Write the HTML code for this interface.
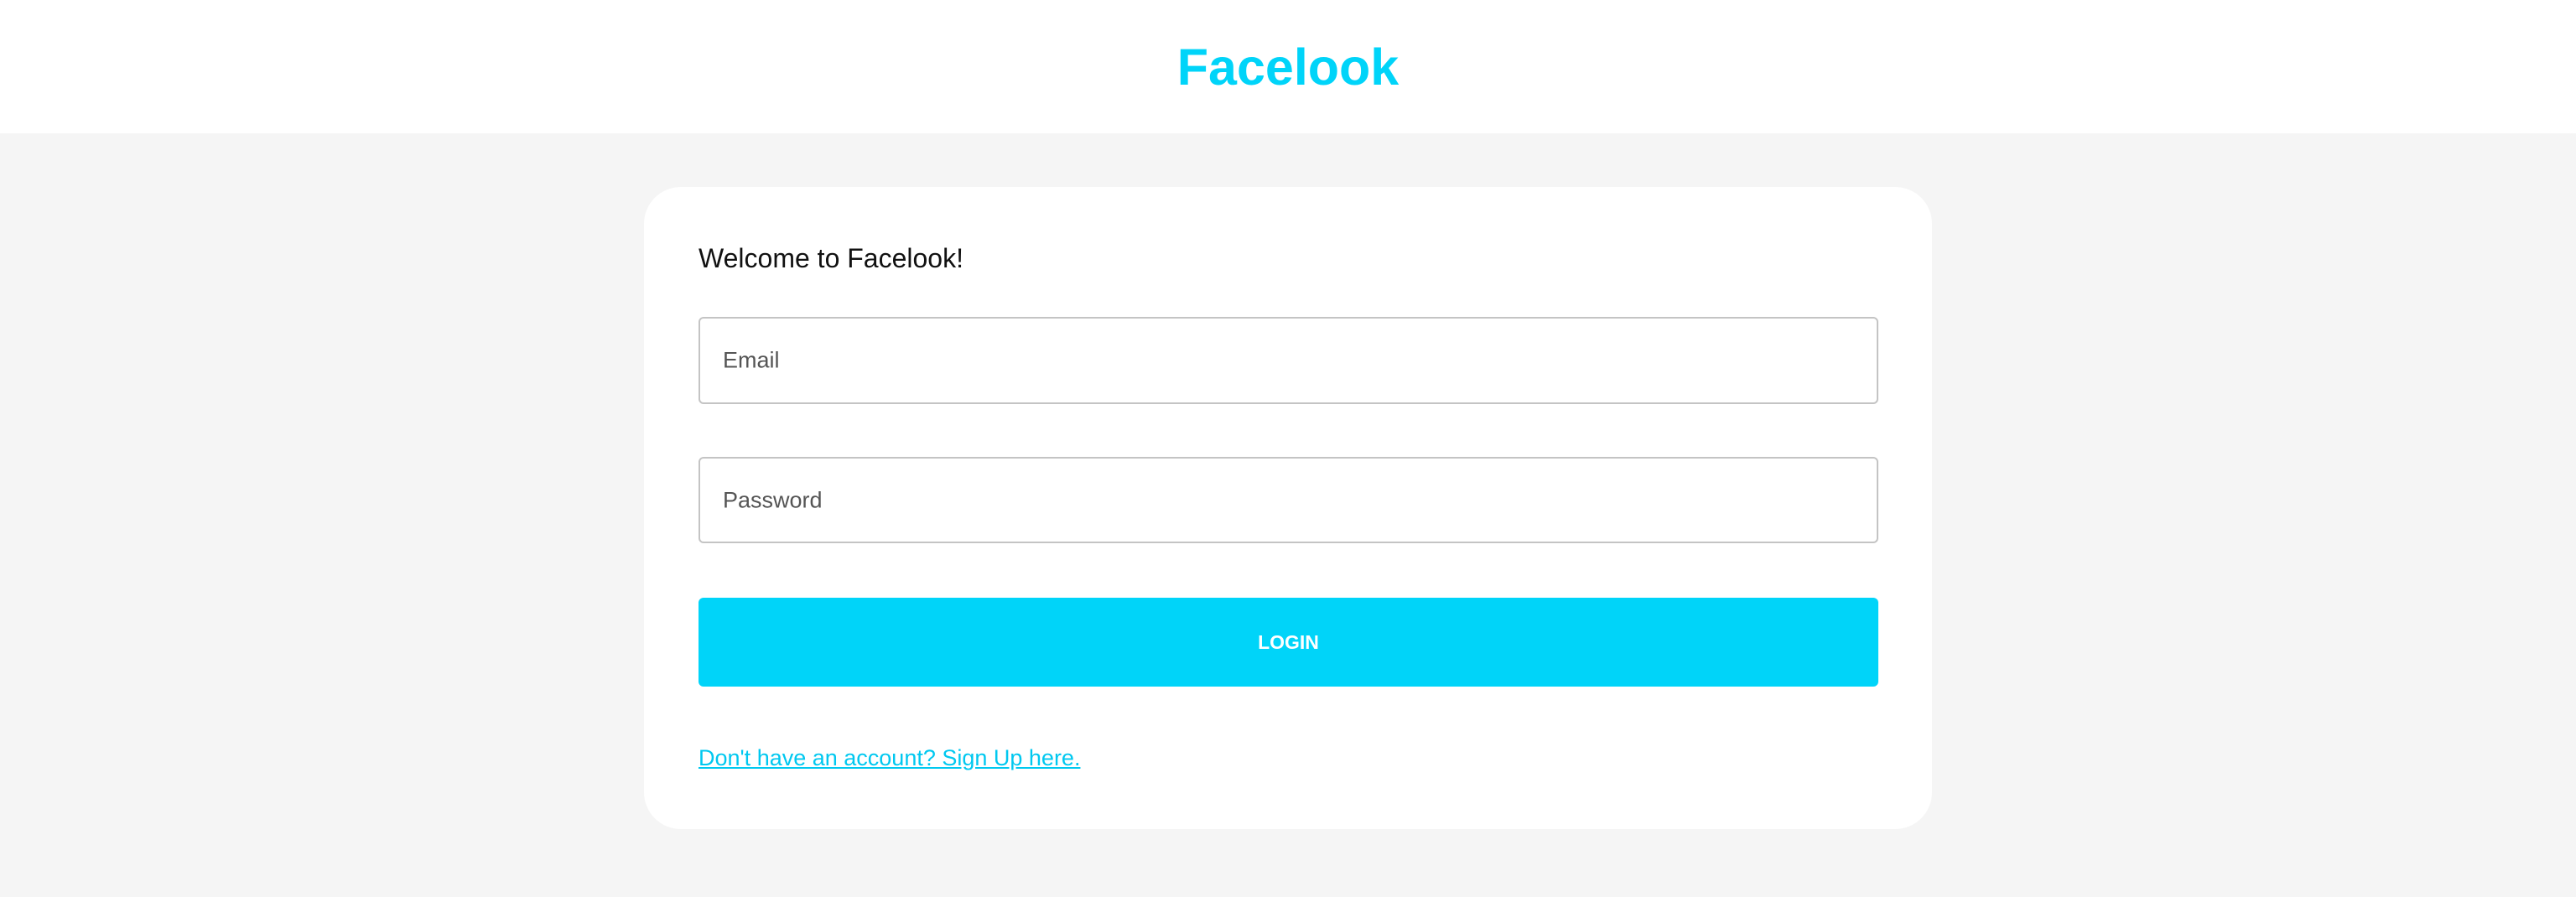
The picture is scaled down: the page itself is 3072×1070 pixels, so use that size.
<!DOCTYPE html>
<html><head><meta charset="utf-8"><style>
html,body{margin:0;padding:0;width:3072px;height:1070px;background:#f5f5f5;font-family:"Liberation Sans",sans-serif;overflow:hidden}
.hdr{position:absolute;left:0;top:0;width:3072px;height:159px;background:#fff}
.logo{position:absolute;left:0;width:3072px;top:40px;text-align:center;font-weight:bold;font-size:61px;color:#00d4f9;line-height:80px}
.card{position:absolute;left:768px;top:223px;width:1536px;height:766px;background:#fff;border-radius:44px}
.wel{position:absolute;left:833px;top:288px;font-size:32px;color:#111;line-height:40px}
.inp{position:absolute;left:833px;width:1403px;border:2px solid #c4c4c4;border-radius:6px;background:#fff;box-sizing:content-box}
.inp span{position:absolute;left:27px;top:50%;transform:translateY(-50%);font-size:27px;color:#555}
.btn{position:absolute;left:833px;top:713px;width:1407px;height:106px;background:#00d4f9;border-radius:6px;color:#fff;font-weight:bold;font-size:23px;text-align:center;line-height:106px}
.lnk{position:absolute;left:833px;top:884px;font-size:27px;color:#00c8f0;text-decoration:underline;line-height:40px}
</style></head><body>
<div class="hdr"></div>
<div class="logo">Facelook</div>
<div class="card"></div>
<div class="wel">Welcome to Facelook!</div>
<div class="inp" style="top:378px;height:100px"><span>Email</span></div>
<div class="inp" style="top:545px;height:99px"><span>Password</span></div>
<div class="btn">LOGIN</div>
<div class="lnk">Don't have an account? Sign Up here.</div>
</body></html>
